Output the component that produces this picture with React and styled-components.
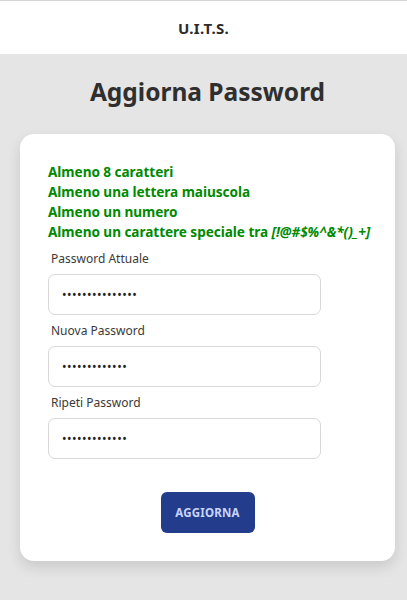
import React from "react";
import styled, { createGlobalStyle } from "styled-components";

const GlobalStyle = createGlobalStyle`
  html, body {
    margin: 0;
    padding: 0;
    background: #e5e5e5;
    font-family: "Noto Sans", "Open Sans", sans-serif;
  }
`;

const Page = styled.div`
  min-height: 600px;
  background: #e5e5e5;
`;

const TopBar = styled.header`
  height: 54px;
  background: #fff;
  border-top: 1px solid #d6d6d6;
  box-sizing: border-box;
  display: flex;
  align-items: center;
  justify-content: center;
  font-size: 15px;
  font-weight: 700;
  color: #2b2b2b;
  letter-spacing: 0.3px;
`;

const Title = styled.h1`
  margin: 20px 0 0;
  height: 36px;
  text-align: center;
  font-size: 24.5px;
  font-weight: 700;
  color: #2f2f2f;
  line-height: 36px;
  padding-left: 8px;
`;

const Card = styled.div`
  margin: 24px 12px 0 20px;
  background: #fff;
  border-radius: 14px;
  box-shadow: 0 6px 14px rgba(0, 0, 0, 0.12);
  padding: 28px 28px 27px;
  height: 427px;
  box-sizing: border-box;
`;

const Rules = styled.ul`
  list-style: none;
  margin: 0;
  padding: 0;
`;

const Rule = styled.li`
  color: #008a00;
  font-weight: 700;
  font-size: 13.6px;
  line-height: 20px;
  letter-spacing: -0.05px;
  white-space: nowrap;
  em {
    font-style: italic;
  }
`;

const Field = styled.div`
  margin-top: ${p => (p.$first ? "9px" : "8px")};
  width: 273px;
`;

const Label = styled.label`
  display: block;
  margin: 0 0 7px 3px;
  font-size: 12px;
  line-height: 16px;
  color: #3a3a3a;
`;

const Input = styled.input`
  display: block;
  width: 100%;
  height: 41px;
  box-sizing: border-box;
  border: 1px solid #d8d8d8;
  border-radius: 7px;
  padding: 0 13px;
  font-size: 12px;
  color: #222;
  letter-spacing: 0.5px;
  outline: none;
  background: #fff;
  font-family: "Noto Sans", sans-serif;
`;

const Actions = styled.div`
  display: flex;
  justify-content: center;
  margin-top: 33px;
`;

const Button = styled.button`
  width: 94px;
  height: 41px;
  border: none;
  border-radius: 6px;
  background: #233c8b;
  color: #c8d5ff;
  font-family: "Noto Sans", sans-serif;
  font-weight: 700;
  font-size: 11.5px;
  letter-spacing: 0.2px;
  cursor: pointer;
`;

const fields = [
  { label: "Password Attuale", value: "aaaaaaaaaaaaaaa" },
  { label: "Nuova Password", value: "aaaaaaaaaaaaa" },
  { label: "Ripeti Password", value: "aaaaaaaaaaaaa" },
];

export default function App() {
  return (
    <Page>
      <GlobalStyle />
      <TopBar>U.I.T.S.</TopBar>
      <Title>Aggiorna Password</Title>
      <Card>
        <Rules>
          <Rule>Almeno 8 caratteri</Rule>
          <Rule>Almeno una lettera maiuscola</Rule>
          <Rule>Almeno un numero</Rule>
          <Rule>
            Almeno un carattere speciale tra <em>[!@#$%^&amp;*()_+]</em>
          </Rule>
        </Rules>
        {fields.map((f, i) => (
          <Field key={f.label} $first={i === 0}>
            <Label>{f.label}</Label>
            <Input type="password" value={f.value} readOnly />
          </Field>
        ))}
        <Actions>
          <Button>AGGIORNA</Button>
        </Actions>
      </Card>
    </Page>
  );
}
